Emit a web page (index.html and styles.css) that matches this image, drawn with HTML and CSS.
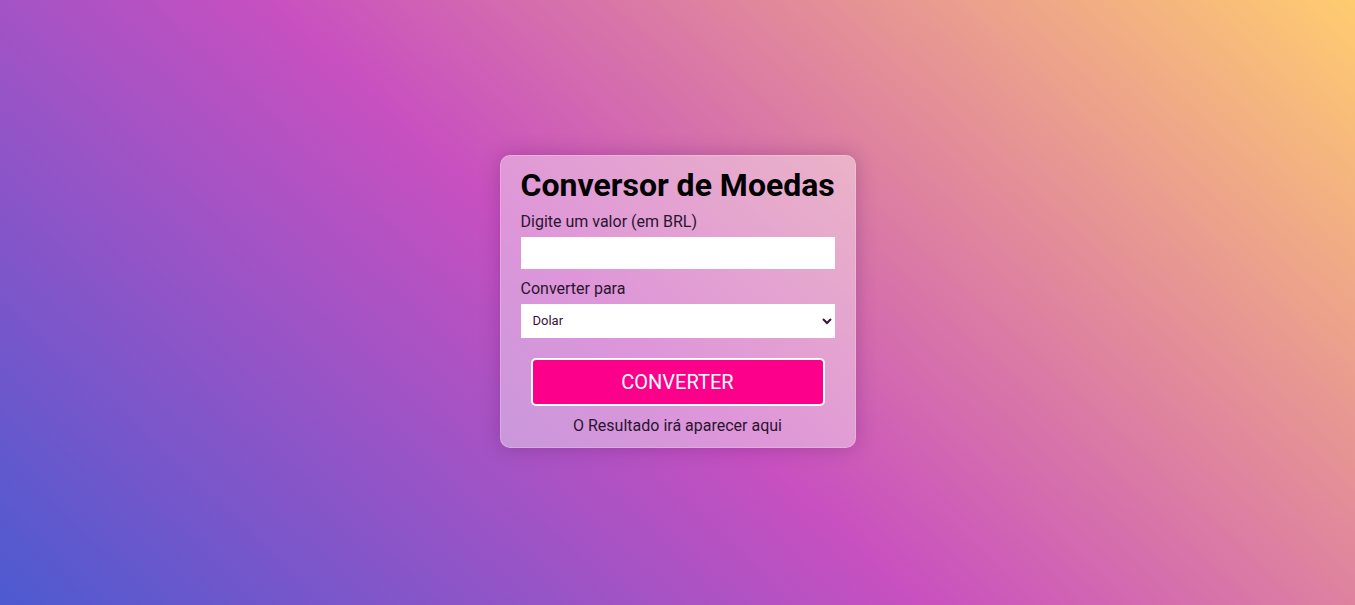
FILE: index.html
```html
<!DOCTYPE html>
<html lang="pt-BR">
<head>
<meta charset="UTF-8">
<title>Conversor de Moedas</title>
<link rel="stylesheet" href="styles.css">
</head>
<body>
<main class="card">
  <h1 class="title">Conversor de Moedas</h1>
  <label class="label" for="valor">Digite um valor (em BRL)</label>
  <input class="field" id="valor" type="number">
  <label class="label" for="moeda">Converter para</label>
  <select class="field select" id="moeda">
    <option>Dolar</option>
    <option>Euro</option>
  </select>
  <button class="btn" type="button">CONVERTER</button>
  <p class="result">O Resultado irá aparecer aqui</p>
</main>
</body>
</html>
```
FILE: styles.css
```css
html, body {
  margin: 0;
  padding: 0;
  height: 100%;
}
body {
  box-sizing: border-box;
  padding-bottom: 3px;
  font-family: Roboto, "Liberation Sans", sans-serif;
  background: linear-gradient(43deg, #4d5ad0 0%, #C850C0 46%, #FFCC70 100%);
  display: flex;
  align-items: center;
  justify-content: center;
}
.card {
  box-sizing: border-box;
  width: 356px;
  padding: 10px 20px 12px;
  border: 1px solid rgba(255, 255, 255, 0.2);
  border-radius: 10px;
  background: rgba(255, 255, 255, 0.4);
  box-shadow: 0 0 20px rgba(60, 0, 80, 0.25);
  display: flex;
  flex-direction: column;
}
.title {
  margin: 0 0 8px;
  font-size: 32px;
  font-weight: 700;
  color: #000;
  white-space: nowrap;
}
.label {
  font-size: 16px;
  color: #2a1530;
  margin-bottom: 6px;
}
.field {
  box-sizing: border-box;
  width: 100%;
  height: 32px;
  border: none;
  background: #fff;
  margin: 0 0 10px;
  font-family: Roboto, "Liberation Sans", sans-serif;
}
.select {
  height: 34px;
  font-size: 13px;
  padding: 0 8px;
  color: #3a1036;
  margin-bottom: 20px;
}
.btn {
  box-sizing: border-box;
  margin: 0 10px;
  height: 48px;
  background: #fd008b;
  border: 2px solid #fff;
  border-radius: 5px;
  color: #fff;
  font-family: Roboto, "Liberation Sans", sans-serif;
  font-size: 20px;
}
.result {
  margin: 10px 0 0;
  text-align: center;
  font-size: 16px;
  color: #2a1530;
}
```
